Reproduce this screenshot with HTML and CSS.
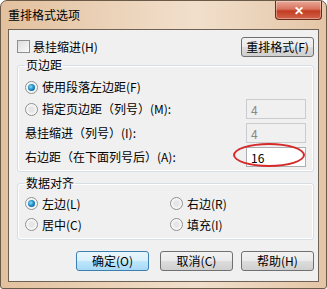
FILE: index.html
```html
<!DOCTYPE html>
<html lang="zh-CN">
<head>
  <meta charset="UTF-8" />
  <title>重排格式选项</title>
  <link rel="stylesheet" href="styles.css">
</head>
<body>
  <div class="window">
    <div class="titlebar">
      <span class="title">重排格式选项</span>
      <span class="close">✕</span>
    </div>

    <div class="client">
      <div class="toprow">
        <label class="check"><span class="box"></span>悬挂缩进(H)</label>
        <button class="btn">重排格式(F)</button>
      </div>

      <fieldset class="group margins">
        <legend>页边距</legend>
        <div class="row">
          <label class="radio"><span class="dot on"></span>使用段落左边距(F)</label>
        </div>
        <div class="row">
          <label class="radio"><span class="dot"></span>指定页边距（列号）(M):</label>
          <input class="num" type="text" value="4" disabled>
        </div>
        <div class="row">
          <label class="plain">悬挂缩进（列号）(I):</label>
          <input class="num" type="text" value="4" disabled>
        </div>
        <div class="row">
          <label class="plain">右边距（在下面列号后）(A):</label>
          <div class="mark">
            <input class="num" type="text" value="16">
            <span class="ring"></span>
          </div>
        </div>
      </fieldset>

      <fieldset class="group align">
        <legend>数据对齐</legend>
        <div class="grid">
          <label class="radio"><span class="dot on"></span>左边(L)</label>
          <label class="radio"><span class="dot"></span>右边(R)</label>
          <label class="radio"><span class="dot"></span>居中(C)</label>
          <label class="radio"><span class="dot"></span>填充(I)</label>
        </div>
      </fieldset>

      <div class="buttons">
        <button class="btn default">确定(O)</button>
        <button class="btn">取消(C)</button>
        <button class="btn">帮助(H)</button>
      </div>
    </div>
  </div>
</body>
</html>
```

FILE: styles.css
```css
body {
  margin: 0;
  font-family: "Noto Sans CJK SC", "Liberation Sans", sans-serif;
  font-size: 12px;
  color: #000;
  background: #fff;
}

.window {
  width: 327px;
  height: 289px;
  box-sizing: border-box;
  border: 1px solid #6b5a48;
  border-radius: 7px 7px 3px 3px;
  background: linear-gradient(90deg, #e2c19e 0%, #eed8c1 45%, #f1dfcc 60%, #e4c6a6 100%);
  padding: 0 7px 6px 7px;
  display: flex;
  flex-direction: column;
}

.titlebar {
  height: 28px;
  display: flex;
  justify-content: space-between;
  align-items: flex-start;
}

.title {
  margin-top: 6px;
  line-height: 16px;
}

.close {
  width: 45px;
  height: 18px;
  margin-right: -3px;
  border: 1px solid #6e2a1c;
  border-top: none;
  border-radius: 0 0 4px 4px;
  background: linear-gradient(180deg, #e9a898 0%, #d9735e 45%, #c23c22 55%, #d0644a 100%);
  color: #fff;
  font-size: 12px;
  font-weight: bold;
  text-align: center;
  line-height: 18px;
  box-shadow: inset 0 0 0 1px rgba(255, 255, 255, 0.35);
}

.client {
  flex: 1;
  background: #f0f0f0;
  border: 1px solid #6f6154;
  padding: 6px 4px 0 8px;
  display: flex;
  flex-direction: column;
}

.toprow {
  height: 21px;
  display: flex;
  justify-content: space-between;
  align-items: center;
}

.check, .radio, .plain {
  display: flex;
  align-items: center;
  line-height: 14px;
  white-space: nowrap;
}

.box {
  width: 11px;
  height: 11px;
  border: 1px solid #8e8f8f;
  background: linear-gradient(135deg, #dcdcdc, #fbfbfb);
  margin-right: 3px;
}

.dot {
  width: 11px;
  height: 11px;
  border: 1px solid #8e8f8f;
  border-radius: 50%;
  background: radial-gradient(circle, #e6e6e6 30%, #fbfbfb 70%);
  margin-right: 4px;
  position: relative;
}

.dot.on::after {
  content: "";
  position: absolute;
  left: 2px;
  top: 2px;
  width: 7px;
  height: 7px;
  border-radius: 50%;
  background: radial-gradient(circle at 40% 40%, #8fe0f5 0%, #1a87c6 50%, #0d4f7e 100%);
}

.btn {
  font-family: inherit;
  font-size: 12px;
  width: 73px;
  height: 20px;
  padding: 0;
  border: 1px solid #707070;
  border-radius: 3px;
  background: linear-gradient(180deg, #f2f2f2 0%, #ebebeb 50%, #dddddd 51%, #cfcfcf 100%);
  color: #000;
  line-height: 16px;
}

.btn.default {
  border-color: #3c7fb1;
  background: linear-gradient(180deg, #eaf6fd 0%, #d9f0fc 50%, #bee6fd 51%, #a7d9f5 100%);
  margin-right: 3px;
}

.group {
  margin: 0;
  padding: 0 7px 4px 7px;
  border: 1px solid #d5dfe5;
  border-radius: 3px;
  box-shadow: inset 0 0 0 1px #fff;
}

.group legend {
  padding: 0 1px;
  line-height: 14px;
}

.margins {
  margin-top: 1px;
}

.row {
  height: 20px;
  display: flex;
  justify-content: space-between;
  align-items: center;
  margin-top: 4px;
}

.margins .row:first-of-type {
  margin-top: 5px;
}

.margins .row:nth-of-type(2) {
  margin-top: 2px;
}

.num {
  width: 60px;
  height: 20px;
  box-sizing: border-box;
  border: 1px solid #abadb3;
  padding: 0 4px;
  font-family: inherit;
  font-size: 12px;
  background: #fff;
  color: #000;
}

.num:disabled {
  background: #f0f0f0;
  border-color: #c9cbcf;
  color: #8a8a8a;
}

.mark {
  position: relative;
}

.ring {
  position: absolute;
  left: -13px;
  top: -4px;
  width: 72px;
  height: 24px;
  border: 2px solid #d42a2a;
  border-radius: 50%;
  box-sizing: border-box;
}

.align {
  margin-top: 4px;
}

.grid {
  display: grid;
  grid-template-columns: 145px 1fr;
  grid-auto-rows: 21px;
  margin-top: 3px;
  align-items: center;
}

.buttons {
  display: flex;
  justify-content: flex-end;
  gap: 8px;
  margin-top: 11px;
}
```
